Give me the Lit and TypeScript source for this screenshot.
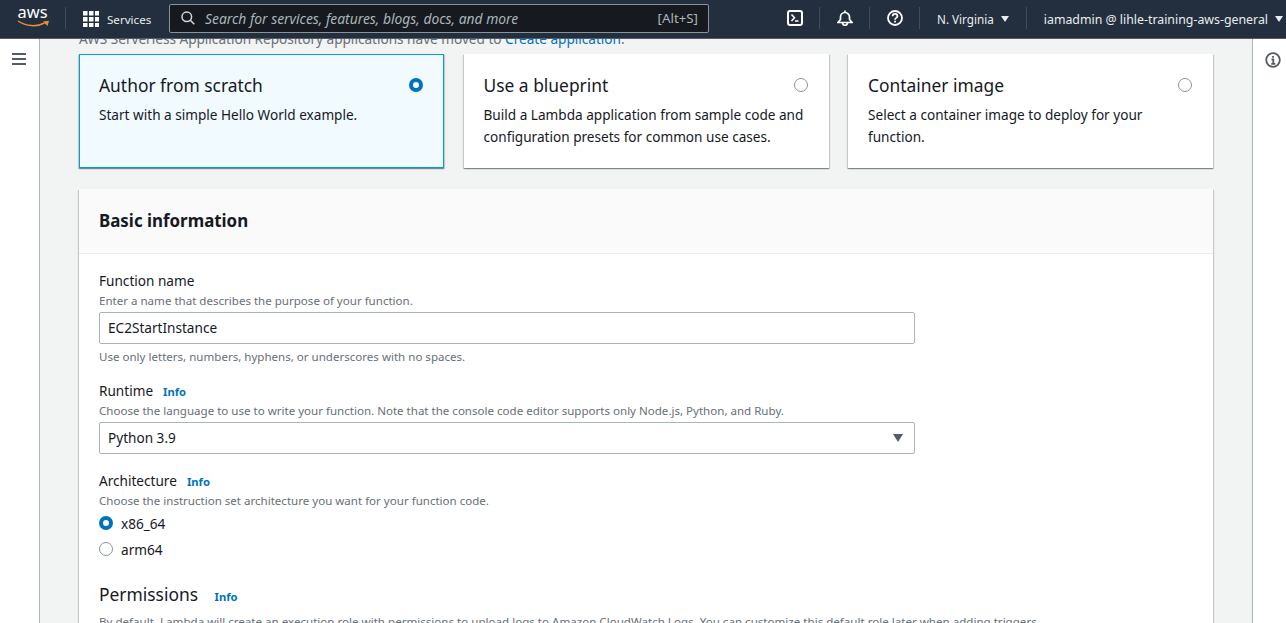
import { LitElement, html, css } from 'lit';
import { customElement } from 'lit/decorators.js';

@customElement('app-root')
export class AppRoot extends LitElement {
  static styles = css`
    :host {
      display: flex;
      flex-direction: column;
      height: 100vh;
      overflow: hidden;
      font-family: 'Noto Sans', sans-serif;
      font-size: 13.6px;
      color: #16191f;
      background: #f2f3f3;
    }
    svg { display: block; }

    /* top bar */
    .topbar {
      position: relative;
      z-index: 2;
      flex: none;
      height: 38px;
      box-sizing: content-box;
      border-bottom: 1px solid #545b64;
      background: #232f3e;
      color: #eaeded;
      display: flex;
      align-items: center;
      font-size: 12px;
      white-space: nowrap;
    }
    .topbar > * { flex: none; }
    .logo { margin-left: 17px; width: 33px; }
    .logo text { font-family: 'Noto Sans', sans-serif; font-size: 17px; fill: #fff; }
    .sep { width: 1px; height: 22px; margin-top: -2px; background: #414d5c; }
    .sep.first { margin-left: 15px; }
    .services { display: flex; align-items: center; gap: 8px; margin-left: 17px; width: 70px; font-size: 11.6px; }
    .search {
      margin: -2px 0 0 16px;
      width: 540px;
      height: 29px;
      border: 1px solid #879596;
      border-radius: 2px;
      background: #16191f;
      display: flex;
      align-items: center;
      box-sizing: border-box;
      padding: 0 10px 0 11px;
      color: #aab7b8;
      font-size: 13.85px;
    }
    .search svg { margin-right: 10px; }
    .search em { flex: 1; }
    .search span { font-size: 13.3px; }
    .icon-btn { width: 49px; display: flex; justify-content: center; margin-top: -2px; }
    .icon-btn.first { margin-left: 61px; }
    .region { display: flex; align-items: center; gap: 7px; padding: 0 12px 0 17px; }
    .region.small { font-size: 11.7px; padding-right: 17px; }
    .region.user { font-size: 12.35px; }
    .caret { width: 0; height: 0; border-left: 4px solid transparent; border-right: 4px solid transparent; border-top: 6px solid currentColor; }

    /* page */
    .page { flex: 1; min-height: 0; display: flex; }
    .rail { flex: none; background: #fff; border-color: #aab7b8; border-style: solid; border-width: 0; box-sizing: border-box; }
    .rail.left { width: 40px; border-right-width: 1px; display: flex; justify-content: center; padding: 14px 2px 0 0; }
    .rail.right { width: 34px; border-left-width: 1px; display: flex; justify-content: flex-end; padding: 13px 5px 0 0; }
    .main { flex: 1; min-width: 0; padding: 0 39px 0 39px; }
    .notice { margin: -10px 0 0; height: 25px; line-height: 20px; color: #687078; white-space: nowrap; }
    .notice a { color: #0073bb; }

    /* creation option cards */
    .cards { display: grid; grid-template-columns: repeat(3, 1fr); column-gap: 19.5px; margin-bottom: 21px; }
    .card {
      height: 114px;
      box-sizing: border-box;
      background: #fff;
      padding: 18px 20px;
      position: relative;
      box-shadow: 0 1px 1px 0 rgba(0, 28, 36, 0.3), 1px 1px 1px 0 rgba(0, 28, 36, 0.15), -1px 1px 1px 0 rgba(0, 28, 36, 0.15);
    }
    .card.selected { background: #f1faff; border: 1px solid #00a1c9; padding: 17px 19px; }
    .card h3 { margin: 0 0 5px; font-size: 17.4px; line-height: 27px; font-weight: 400; }
    .card p { margin: 0; line-height: 22px; }
    .card .radio { position: absolute; right: 21px; top: 24px; }
    .card.selected .radio { right: 20px; top: 23px; }

    .radio { width: 14px; height: 14px; box-sizing: border-box; border-radius: 50%; border: 1px solid #879596; background: #fff; flex: none; }
    .radio.on { border: 4px solid #0073bb; }

    /* basic information */
    .panel {
      background: #fff;
      box-shadow: 0 1px 1px 0 rgba(0, 28, 36, 0.3), 1px 1px 1px 0 rgba(0, 28, 36, 0.15), -1px 1px 1px 0 rgba(0, 28, 36, 0.15);
    }
    .panel-head {
      height: 65px;
      box-sizing: border-box;
      background: #fafafa;
      border-bottom: 1px solid #eaeded;
      padding: 0 20px 2px;
      display: flex;
      align-items: center;
      font-size: 16.9px;
      font-weight: 700;
    }
    .panel-body { padding: 17px 20px; }
    .field { width: 816px; margin-bottom: 15px; }
    .field.select { margin-bottom: 17px; }
    .label { height: 20px; line-height: 20px; }
    .info { color: #0073bb; font-weight: 700; font-size: 11.2px; line-height: 1; margin-left: 6.5px; }
    .hint { height: 19px; line-height: 19px; font-size: 11.55px; color: #687078; }
    .control {
      height: 32px;
      box-sizing: border-box;
      margin-top: 2px;
      border: 1px solid #aab7b8;
      border-radius: 2px;
      background: #fff;
      display: flex;
      align-items: center;
      justify-content: space-between;
      padding: 0 11px 1px 8px;
    }
    .control .caret { color: #545b64; border-left-width: 5px; border-right-width: 5px; border-top-width: 8px; }
    .after { margin-top: 3px; }
    .choice { display: flex; align-items: center; gap: 8px; height: 26px; }
    h2.perm { margin: 3px 0 0; height: 30px; font-size: 17.4px; line-height: 35px; font-weight: 400; }
    h2.perm .info { margin-left: 12px; }
    .perm-hint { line-height: 19px; font-size: 11.58px; color: #687078; margin-top: 5px; white-space: nowrap; }
  `;

  render() {
    return html`
      <div class="topbar">
        <div class="logo">
          <svg width="33" height="24" viewBox="0 0 33 24" fill="none" style="margin-top:-2px">
            <text x="0.500" y="12" textLength="30" lengthAdjust="spacingAndGlyphs">aws</text>
            <path d="M1 15c8 5.500 19 6 26.500 2" stroke="#ec912d" stroke-width="1.500"/>
            <path d="M26 15.500l6-.8-1.500 5.300z" fill="#ec912d"/>
          </svg>
        </div>
        <div class="sep first"></div>
        <div class="services">
          <svg width="16" height="16" viewBox="0 0 16 16" fill="#fff">
            <rect x="0" y="0" width="4.500" height="4.500"/><rect x="6" y="0" width="4.500" height="4.500"/><rect x="12" y="0" width="4.500" height="4.500"/>
            <rect x="0" y="6" width="4.500" height="4.500"/><rect x="6" y="6" width="4.500" height="4.500"/><rect x="12" y="6" width="4.500" height="4.500"/>
            <rect x="0" y="12" width="4.500" height="4.500"/><rect x="6" y="12" width="4.500" height="4.500"/><rect x="12" y="12" width="4.500" height="4.500"/>
          </svg>
          <span>Services</span>
        </div>
        <div class="search">
          <svg width="14" height="14" viewBox="0 0 14 14" fill="none" stroke="#d5dbdb" stroke-width="1.500"><circle cx="5.800" cy="5.800" r="4.800"/><path d="M9.300 9.300l4 4"/></svg>
          <em>Search for services, features, blogs, docs, and more</em>
          <span>[Alt+S]</span>
        </div>
        <div class="icon-btn first">
          <svg width="16" height="16" viewBox="0 0 16 16" fill="none" stroke="#fff"><rect x="1" y="1" width="14" height="14" rx="2" stroke-width="2"/><path d="M4.500 4.500L7.500 7.800l-3 3.200M8 11h3.500" stroke-width="1.600"/></svg>
        </div>
        <div class="sep"></div>
        <div class="icon-btn">
          <svg width="16" height="16" viewBox="0 0 16 16" fill="none" stroke="#fff" stroke-width="1.700"><path d="M8 0.500v2M1 12.500h14L12.500 9.500V7a4.500 4.500 0 0 0-9 0v2.500zM5.500 12.800a2.500 2.500 0 0 0 5 0"/></svg>
        </div>
        <div class="sep"></div>
        <div class="icon-btn">
          <svg width="16" height="16" viewBox="0 0 16 16" fill="none" stroke="#fff" stroke-width="1.800"><circle cx="8" cy="8" r="7"/><path d="M5.700 6.200c0-3 4.700-3 4.700 0 0 1.700-2.400 1.700-2.400 3.500"/><path d="M8 10.800v1.700"/></svg>
        </div>
        <div class="sep"></div>
        <div class="region small"><span>N. Virginia</span><i class="caret"></i></div>
        <div class="sep"></div>
        <div class="region user"><span>iamadmin @ lihle-training-aws-general</span><i class="caret"></i></div>
      </div>
      <div class="page">
        <div class="rail left">
          <svg width="14" height="12" viewBox="0 0 14 12" fill="none" stroke="#545b64" stroke-width="2"><path d="M0 1h14M0 6h14M0 11h14"/></svg>
        </div>
        <div class="main">
          <div class="notice">AWS Serverless Application Repository applications have moved to <a>Create application</a>.</div>
          <div class="cards">
            <div class="card selected">
              <h3>Author from scratch</h3>
              <p>Start with a simple Hello World example.</p>
              <div class="radio on"></div>
            </div>
            <div class="card">
              <h3>Use a blueprint</h3>
              <p>Build a Lambda application from sample code and configuration presets for common use cases.</p>
              <div class="radio"></div>
            </div>
            <div class="card">
              <h3>Container image</h3>
              <p>Select a container image to deploy for your function.</p>
              <div class="radio"></div>
            </div>
          </div>
          <div class="panel">
            <div class="panel-head">Basic information</div>
            <div class="panel-body">
              <div class="field">
                <div class="label">Function name</div>
                <div class="hint">Enter a name that describes the purpose of your function.</div>
                <div class="control">EC2StartInstance</div>
                <div class="hint after">Use only letters, numbers, hyphens, or underscores with no spaces.</div>
              </div>
              <div class="field select">
                <div class="label">Runtime <span class="info">Info</span></div>
                <div class="hint">Choose the language to use to write your function. Note that the console code editor supports only Node.js, Python, and Ruby.</div>
                <div class="control">Python 3.9<i class="caret"></i></div>
              </div>
              <div class="field">
                <div class="label">Architecture <span class="info">Info</span></div>
                <div class="hint">Choose the instruction set architecture you want for your function code.</div>
                <div class="choice"><div class="radio on"></div>x86_64</div>
                <div class="choice"><div class="radio"></div>arm64</div>
              </div>
              <h2 class="perm">Permissions <span class="info">Info</span></h2>
              <div class="perm-hint">By default, Lambda will create an execution role with permissions to upload logs to Amazon CloudWatch Logs. You can customize this default role later when adding triggers.</div>
            </div>
          </div>
        </div>
        <div class="rail right">
          <svg width="16" height="16" viewBox="0 0 16 16" fill="none" stroke="#545b64" stroke-width="1.800"><circle cx="8" cy="8" r="6.800"/><path d="M6.500 7.500H8.300V11.500M6.300 11.800h4M8 4v1.800"/></svg>
        </div>
      </div>
    `;
  }
}
